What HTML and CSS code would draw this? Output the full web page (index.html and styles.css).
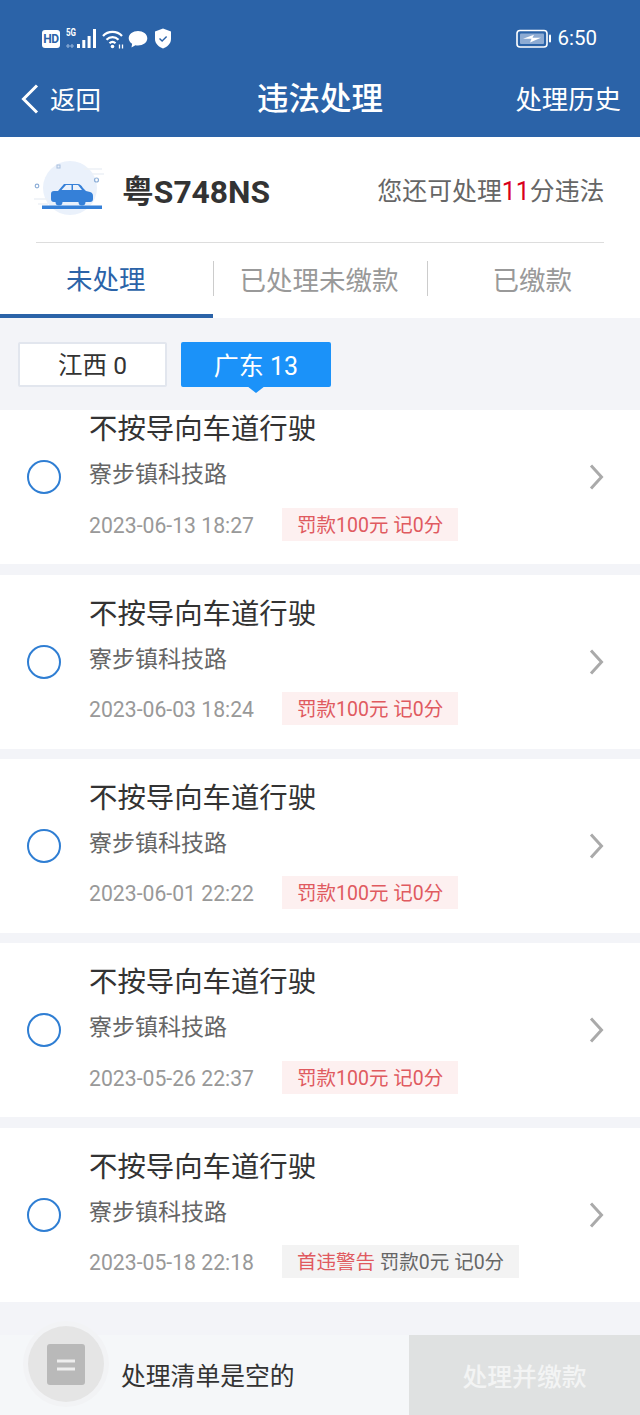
FILE: index.html
```html
<!DOCTYPE html>
<html lang="zh">
<head>
<meta charset="utf-8">
<title>违法处理</title>
<link rel="stylesheet" href="styles.css">
</head>
<body>
<div class="app">
  <header class="header">
    <div class="status">
      <div class="status-left">
        <span class="hd">HD</span>
        <span class="signal">
          <span class="five-g">5G</span>
          <svg width="30" height="20" viewBox="0 0 30 20"><path d="M2 15v4M6 15v4M8 17H0" stroke="#8fb0d8" stroke-width="1.200"/><rect x="11" y="15" width="3" height="4" fill="#fff"/><rect x="16.300" y="11" width="3" height="8" fill="#fff"/><rect x="21.600" y="7" width="3" height="12" fill="#fff"/><rect x="27" y="0" width="3" height="19" fill="#fff"/></svg>
        </span>
        <svg class="wifi" width="24" height="20" viewBox="0 0 24 20" fill="none" stroke="#fff" stroke-width="2.200"><path d="M1 7C6 1.500 15 1.500 20 7"/><path d="M4.500 10.800C8 7.300 13 7.300 16.500 10.800"/><path d="M7.500 14.300C9.500 12.300 11.500 12.300 13.500 14.300"/><circle cx="10.500" cy="17.500" r="1.800" fill="#fff" stroke="none"/><path d="M17.500 15.500v4M20.500 15.500v4" stroke-width="1.300"/></svg>
        <svg class="bubble" width="20" height="18" viewBox="0 0 20 18"><path d="M10 1c5 0 9.300 3 9.300 7.300S15 15.500 10 15.500c-1 0-1.800-.1-2.600-.3L3.500 17.500l.6-3.700C2 12.500.7 10.500.7 8.300.7 4 5 1 10 1z" fill="#fff"/></svg>
        <svg class="shield" width="18" height="21" viewBox="0 0 18 21"><path d="M9 .5l8 3v7.500c0 4.500-3.500 7.800-8 9.500-4.500-1.700-8-5-8-9.500V3.500z" fill="#fff"/><path d="M5.500 10.500l2.600 2.600 4.500-4.700" fill="none" stroke="#2b63a8" stroke-width="1.400"/></svg>
      </div>
      <div class="status-right">
        <svg width="36" height="20" viewBox="0 0 36 20"><rect x="1" y="1.500" width="30" height="16.500" rx="3" fill="none" stroke="#fff" stroke-width="1.600"/><rect x="4" y="4.500" width="24" height="10.500" rx="1" fill="#8dabd3"/><path d="M7 9.800l11-4-1.500 3H25l-11 4.800 1.500-3.800z" fill="#fff"/><rect x="33" y="5.500" width="2" height="8" rx="1" fill="#fff"/></svg>
        <span class="clock">6:50</span>
      </div>
    </div>
    <nav class="nav">
      <div class="back">
        <svg width="18" height="30" viewBox="0 0 18 30" fill="none" stroke="#fff" stroke-width="3"><path d="M16 1.500L2.500 15 16 28.500"/></svg>
        <span class="back-text">返回</span>
      </div>
      <h1 class="title">违法处理</h1>
      <div class="history">处理历史</div>
    </nav>
  </header>

  <section class="car">
    <div class="car-left">
      <svg class="car-icon" width="74" height="58" viewBox="0 0 74 58">
        <circle cx="38" cy="27" r="27" fill="#eaf1fb"/>
        <path d="M52 8h18M60 13h12M2 38h14M6 43h10" stroke="#edf1f6" stroke-width="1.500"/>
        <rect x="25" y="4" width="3" height="3" fill="none" stroke="#a9c0de"/>
        <circle cx="64.500" cy="19" r="2" fill="none" stroke="#8fb0d8" stroke-width="1.200"/>
        <circle cx="5" cy="25" r="1.800" fill="none" stroke="#8fb0d8" stroke-width="1.200"/>
        <path d="M19 33c0-2 1-3 3-3l4 0 6-7h14c2 0 3 1 5 4l3 3 4 1c2 .5 3 2 3 4v3c0 2-1 3-3 3H22c-2 0-3-1-3-3z" fill="#3580d8"/>
        <path d="M29.500 29l4.500-5h5.500v5zM41 24h5l4 5h-9z" fill="#eaf1fb"/>
        <circle cx="27" cy="41" r="3.500" fill="#3580d8"/><circle cx="50" cy="41" r="3.500" fill="#3580d8"/>
        <rect x="10" y="44.500" width="60" height="3.500" fill="#3580d8"/>
      </svg>
      <span class="plate">粤S748NS</span>
    </div>
    <div class="quota">您还可处理<em class="quota-num">11</em>分违法</div>
  </section>

  <div class="tabs">
    <div class="tab active">未处理</div>
    <div class="tab divided">已处理未缴款</div>
    <div class="tab divided">已缴款</div>
  </div>

  <div class="chips">
    <div class="chip">江西 0</div>
    <div class="chip selected">广东 13</div>
  </div>

  <main class="list">
    <div class="list-inner">
      <article class="item">
        <span class="radio"></span>
        <div class="item-body">
          <div class="item-title">不按导向车道行驶</div>
          <div class="item-addr">寮步镇科技路</div>
          <div class="item-meta"><span class="date">2023-06-13 18:27</span><span class="tag fine">罚款100元 记0分</span></div>
        </div>
        <svg class="chev" width="16" height="26" viewBox="0 0 16 26" fill="none" stroke="#aaa" stroke-width="3"><path d="M2 1.500L12.500 13 2 24.500"/></svg>
      </article>
      <article class="item">
        <span class="radio"></span>
        <div class="item-body">
          <div class="item-title">不按导向车道行驶</div>
          <div class="item-addr">寮步镇科技路</div>
          <div class="item-meta"><span class="date">2023-06-03 18:24</span><span class="tag fine">罚款100元 记0分</span></div>
        </div>
        <svg class="chev" width="16" height="26" viewBox="0 0 16 26" fill="none" stroke="#aaa" stroke-width="3"><path d="M2 1.500L12.500 13 2 24.500"/></svg>
      </article>
      <article class="item">
        <span class="radio"></span>
        <div class="item-body">
          <div class="item-title">不按导向车道行驶</div>
          <div class="item-addr">寮步镇科技路</div>
          <div class="item-meta"><span class="date">2023-06-01 22:22</span><span class="tag fine">罚款100元 记0分</span></div>
        </div>
        <svg class="chev" width="16" height="26" viewBox="0 0 16 26" fill="none" stroke="#aaa" stroke-width="3"><path d="M2 1.500L12.500 13 2 24.500"/></svg>
      </article>
      <article class="item">
        <span class="radio"></span>
        <div class="item-body">
          <div class="item-title">不按导向车道行驶</div>
          <div class="item-addr">寮步镇科技路</div>
          <div class="item-meta"><span class="date">2023-05-26 22:37</span><span class="tag fine">罚款100元 记0分</span></div>
        </div>
        <svg class="chev" width="16" height="26" viewBox="0 0 16 26" fill="none" stroke="#aaa" stroke-width="3"><path d="M2 1.500L12.500 13 2 24.500"/></svg>
      </article>
      <article class="item">
        <span class="radio"></span>
        <div class="item-body">
          <div class="item-title">不按导向车道行驶</div>
          <div class="item-addr">寮步镇科技路</div>
          <div class="item-meta"><span class="date">2023-05-18 22:18</span><span class="tag warn"><span class="warn-red">首违警告</span> 罚款0元 记0分</span></div>
        </div>
        <svg class="chev" width="16" height="26" viewBox="0 0 16 26" fill="none" stroke="#aaa" stroke-width="3"><path d="M2 1.500L12.500 13 2 24.500"/></svg>
      </article>
    </div>
  </main>

  <footer class="bar">
    <div class="cart">
      <div class="cart-badge">
        <svg width="38" height="41" viewBox="0 0 38 41"><rect width="38" height="41" rx="3" fill="#b9b9b9"/><path d="M10 17h18M10 25h18" stroke="#eee" stroke-width="3"/></svg>
      </div>
      <span class="cart-text">处理清单是空的</span>
    </div>
    <div class="pay">处理并缴款</div>
  </footer>
</div>
</body>
</html>
```
FILE: styles.css
```css
* { box-sizing: border-box; }
html, body { margin: 0; padding: 0; }
body {
  font-family: Roboto, "Noto Sans CJK SC", sans-serif;
  background: #f3f4f8;
  color: #333;
}
.app { width: 640px; height: 1415px; display: flex; flex-direction: column; overflow: hidden; }

.header { height: 137px; background: #2b63a8; color: #fff; flex: none; }
.status { height: 76px; padding: 27px 43px 0 42px; display: flex; justify-content: space-between; align-items: flex-start; }
.status-left { display: flex; align-items: center; gap: 2px; height: 23px; }
.status-right { display: flex; align-items: center; gap: 5px; height: 23px; }
.hd { width: 18px; height: 18px; border-radius: 3px; background: #fff; color: #2b63a8; font-size: 12px; line-height: 18px; font-weight: 700; text-align: center; letter-spacing: -.5px; }
.signal { position: relative; display: block; width: 30px; height: 20px; margin-left: 4px; }
.five-g { position: absolute; left: 0; top: -2px; font-size: 10px; line-height: 12px; font-weight: 700; transform: scaleX(.8); transform-origin: left; }
.signal svg { display: block; }
.wifi { margin-left: 4px; }
.shield { margin-left: 4px; }
.clock { font-size: 20.500px; line-height: 23px; }
.nav { height: 44px; padding: 0 19px; display: grid; grid-template-columns: 1fr auto 1fr; align-items: center; }
.back { display: flex; align-items: center; gap: 11px; font-size: 25.500px; margin-left: 2px; }
.back-text { padding-bottom: 3px; }
.title { margin: 0; padding-top: 2px; text-align: center; font-size: 31.500px; font-weight: 500; line-height: 44px; }
.history { font-size: 26.400px; justify-self: end; padding-bottom: 3px; }

.car { height: 106px; background: #fff; flex: none; padding: 0 35.500px 0 32px; display: flex; justify-content: space-between; align-items: center; position: relative; }
.car::after { content: ""; position: absolute; left: 36px; right: 36px; bottom: 0; height: 1px; background: #ddd; }
.car-left { display: flex; align-items: center; gap: 16px; }
.car-icon { display: block; }
.plate { font-size: 31.800px; font-weight: 700; color: #333; padding-bottom: 3px; }
.quota { font-size: 24.900px; color: #666; padding-bottom: 2px; }
.quota-num { font-style: normal; color: #d9001b; }

.tabs { height: 75px; background: #fff; flex: none; display: grid; grid-template-columns: repeat(3, 1fr); }
.tab { position: relative; display: flex; align-items: center; justify-content: center; font-size: 26.500px; color: #999; padding: 0 2px 5px 0; }
.tab.active { color: #2b63a8; border-bottom: 4px solid #2b63a8; padding-bottom: 2px; }
.tab.divided::before { content: ""; position: absolute; left: 0; top: 18px; height: 35px; width: 1px; background: #ccc; }

.chips { height: 92px; flex: none; padding: 24px 18px 0; display: flex; gap: 14px; align-items: flex-start; }
.chip { width: 149px; height: 45px; background: #fff; border: 2px solid #e2e6ee; border-radius: 2px; display: flex; align-items: center; justify-content: center; font-size: 24.500px; color: #333; padding-bottom: 2px; }
.chip.selected { position: relative; width: 150px; background: #1b92f9; border-color: #1b92f9; color: #fff; font-size: 25px; }
.chip.selected::after { content: ""; position: absolute; left: 50%; bottom: -8px; margin-left: -9px; border-left: 9px solid transparent; border-right: 9px solid transparent; border-top: 7px solid #1b92f9; }

.list { height: 925px; flex: none; overflow: hidden; }
.list-inner { margin-top: -19.700px; display: flex; flex-direction: column; gap: 10.330px; }
.item { height: 174px; background: #fff; display: flex; align-items: center; padding: 0 35px 0 27px; }
.radio { width: 34px; height: 34px; border-radius: 50%; border: 2px solid #2f7ed3; flex: none; }
.item-body { flex: 1; min-width: 0; padding-left: 28px; align-self: stretch; padding-top: 22px; }
.item-title { font-size: 28.400px; line-height: 36px; color: #333; }
.item-addr { font-size: 23px; line-height: 32px; color: #666; margin-top: 11px; }
.item-meta { display: flex; align-items: center; margin-top: 16.500px; height: 33px; }
.date { font-size: 21.200px; color: #999; width: 193px; flex: none; padding-top: 2px; }
.tag { font-size: 19.500px; height: 33px; line-height: 31px; padding: 2px 15px 0; white-space: nowrap; }
.tag.fine { background: #fdf0f0; color: #e05a5f; }
.tag.warn { background: #f3f3f3; color: #666; }
.warn-red { color: #e05a5f; }
.chev { display: block; flex: none; }

.bar { height: 80px; flex: none; display: flex; background: #f5f7f9; }
.cart { flex: 1; position: relative; padding-left: 121px; display: flex; align-items: center; }
.cart-text { font-size: 24.800px; color: #333; padding-bottom: 2px; }
.cart-badge { position: absolute; left: 28px; top: -9px; width: 76px; height: 76px; border-radius: 50%; background: #e5e5e5; box-shadow: 0 0 0 5px #f2f3f5; display: flex; align-items: center; justify-content: center; }
.cart-badge svg { display: block; }
.pay { width: 231px; background: #dfe1e1; color: #f3f4f4; font-size: 24.800px; font-weight: 500; display: flex; align-items: center; justify-content: center; }
```
